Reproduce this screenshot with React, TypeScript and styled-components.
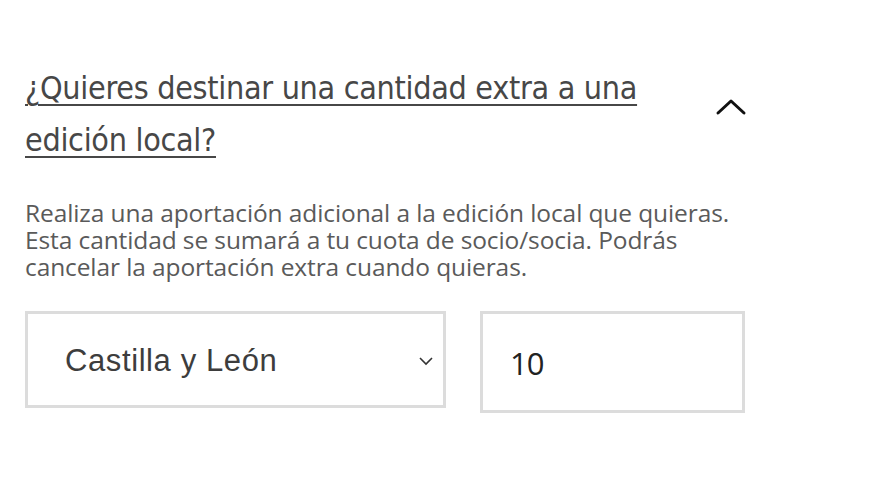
import React, { useState } from "react";
import styled, { createGlobalStyle } from "styled-components";

const GlobalStyle = createGlobalStyle`
  html, body {
    margin: 0;
    padding: 0;
    background: #ffffff;
  }
`;

const Section = styled.section`
  width: 722px;
  padding: 62px 0 0 25px;
  font-family: "Open Sans", "Noto Sans", sans-serif;
`;

const Header = styled.div`
  display: flex;
  justify-content: space-between;
  align-items: flex-start;
`;

const Title = styled.a`
  width: 650px;
  font-family: "DejaVu Sans Condensed", "Noto Sans", sans-serif;
  font-size: 32px;
  line-height: 52px;
  color: #474747;
  text-decoration: underline;
  text-decoration-thickness: 2px;
  text-underline-offset: 5px;
  letter-spacing: -0.3px;
`;

const Toggle = styled.button`
  margin-top: 34px;
  padding: 0;
  width: 32px;
  height: 24px;
  border: none;
  background: none;
  cursor: pointer;
`;

const Description = styled.p`
  margin: 33px 0 0;
  font-size: 24.5px;
  line-height: 27px;
  color: #5a5a5a;
  letter-spacing: -0.1px;
`;

const Fields = styled.div`
  display: flex;
  gap: 34px;
  margin-top: 31px;
`;

const SelectBox = styled.div`
  position: relative;
  width: 421px;
  height: 97px;
  box-sizing: border-box;
  border: 3px solid #dcdcdc;
`;

const Select = styled.select`
  appearance: none;
  width: 100%;
  height: 100%;
  border: none;
  background: transparent;
  padding: 2px 0 0 37px;
  font-family: "Liberation Sans", Arial, sans-serif;
  font-size: 31px;
  letter-spacing: 0.6px;
  color: #3d3d3d;
  outline: none;
`;

const Caret = styled.svg`
  position: absolute;
  right: 10px;
  top: 43px;
  pointer-events: none;
`;

const Amount = styled.input`
  width: 265px;
  height: 102px;
  box-sizing: border-box;
  border: 3px solid #dcdcdc;
  padding: 2px 0 0 27px;
  font-family: "Open Sans", "Noto Sans", sans-serif;
  font-size: 31px;
  letter-spacing: -1px;
  color: #222;
  outline: none;
`;

export default function App() {
  const [region, setRegion] = useState("Castilla y León");
  const [amount, setAmount] = useState("10");

  return (
    <>
      <GlobalStyle />
      <Section>
        <Header>
          <Title href="#">¿Quieres destinar una cantidad extra a una edición local?</Title>
          <Toggle aria-label="Cerrar">
            <svg width="32" height="20" viewBox="0 0 32 20">
              <path d="M3 16 L16 4 L29 16" fill="none" stroke="#111" strokeWidth="3" strokeLinecap="round" strokeLinejoin="round" />
            </svg>
          </Toggle>
        </Header>
        <Description>
          Realiza una aportación adicional a la edición local que quieras.
          <br />
          Esta cantidad se sumará a tu cuota de socio/socia. Podrás
          <br />
          cancelar la aportación extra cuando quieras.
        </Description>
        <Fields>
          <SelectBox>
            <Select value={region} onChange={(e) => setRegion(e.target.value)}>
              <option>Andalucía</option>
              <option>Castilla y León</option>
              <option>Madrid</option>
            </Select>
            <Caret width="14" height="9" viewBox="0 0 14 9">
              <path d="M1 1 L7 7 L13 1" fill="none" stroke="#333" strokeWidth="1.6" />
            </Caret>
          </SelectBox>
          <Amount value={amount} onChange={(e) => setAmount(e.target.value)} />
        </Fields>
      </Section>
    </>
  );
}
